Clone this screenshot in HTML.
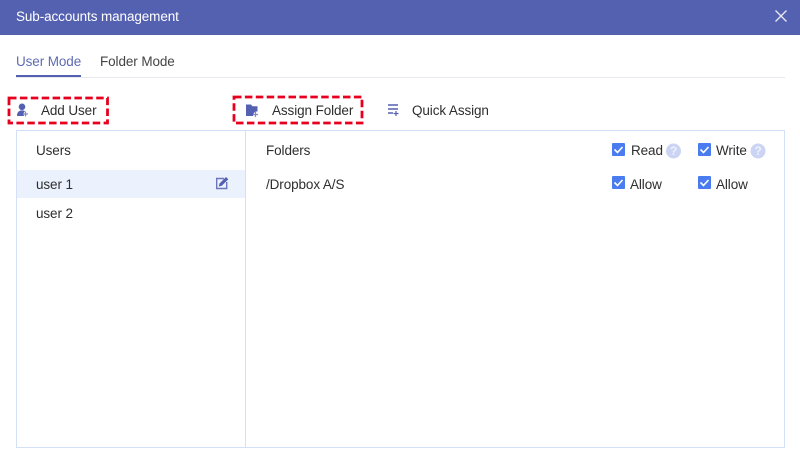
<!DOCTYPE html>
<html>
<head>
<meta charset="utf-8">
<style>
html,body{margin:0;padding:0;width:800px;height:467px;overflow:hidden;background:#fff}
body{position:relative;font-family:"Liberation Sans",Arial,sans-serif;font-size:13.5px;letter-spacing:-.1px;color:#2e2e2e}
.a{position:absolute;white-space:nowrap;line-height:16px;margin-top:1px}
.b{position:absolute}
svg{position:absolute;overflow:visible}
</style>
</head>
<body>
<div class="b" style="left:0;top:0;width:800px;height:35px;background:#5461b1"></div>
<div class="a" style="left:16px;top:8px;color:#fff">Sub-accounts management</div>
<svg style="left:0;top:0" width="800" height="35"><path d="M775.500 10.500L786.500 21.500M786.500 10.500L775.500 21.500" stroke="#e8eaf6" stroke-width="1.300" fill="none"/></svg>

<div class="a" style="left:16px;top:53px;color:#5f6bb5">User Mode</div>
<div class="a" style="left:100px;top:53px;color:#444">Folder Mode</div>
<div class="b" style="left:16px;top:77px;width:769px;height:1px;background:#e6e9f2"></div>
<div class="b" style="left:16px;top:75px;width:65px;height:2px;background:#5461b1"></div>

<div class="b" style="left:16px;top:130px;width:767px;height:316px;border:1px solid #d3e0f7"></div>
<div class="b" style="left:245px;top:131px;width:1px;height:317px;background:#d3e0f7"></div>
<div class="b" style="left:17px;top:170px;width:228px;height:28px;background:#ebf2fd"></div>

<svg style="left:0;top:0" width="800" height="130">
<rect x="9" y="98" width="98.500" height="25" fill="none" stroke="#e6001e" stroke-width="2.800" stroke-dasharray="7.500 3.400"/>
<rect x="234" y="97" width="128" height="26" fill="none" stroke="#e6001e" stroke-width="2.800" stroke-dasharray="7.500 3.400"/>
<!-- add user -->
<circle cx="22" cy="106.800" r="3.300" fill="#5461b1"/>
<path d="M17 116c0-3.800 2-5.600 5-5.600 1.300 0 2.200.3 3 .8-1 .7-1.500 1.700-1.500 2.800 0 .7.200 1.400.6 2z" fill="#5461b1"/>
<path d="M25.500 111.500v5M23 114h5" stroke="#7f89c6" stroke-width="1.200" fill="none"/>
<!-- folder -->
<path d="M246 104.500h5l1.500 1.800h5v5.200c-2.500-.3-4 1-4.500 4.500h-7z" fill="#5461b1"/>
<path d="M255.500 112v5M253 114.500h5" stroke="#7f89c6" stroke-width="1.200" fill="none"/>
<!-- quick assign -->
<path d="M388 105h10M388 109h10M388 113h5" stroke="#5461b1" stroke-width="1.500" fill="none"/>
<path d="M396 111v5M393.500 113.500h5" stroke="#5461b1" stroke-width="1.200" fill="none"/>
</svg>

<div class="a" style="left:41px;top:102px">Add User</div>
<div class="a" style="left:272px;top:102px">Assign Folder</div>
<div class="a" style="left:412px;top:102px">Quick Assign</div>

<div class="a" style="left:36px;top:142px">Users</div>
<div class="a" style="left:36px;top:176px">user 1</div>
<div class="a" style="left:36px;top:205px">user 2</div>
<div class="a" style="left:266px;top:142px">Folders</div>
<div class="a" style="left:266px;top:176px">/Dropbox A/S</div>

<svg style="left:0;top:130px" width="800" height="70">
<!-- edit -->
<path d="M224 48.500h-7.300v10h10v-6.500" fill="#eef1fb" stroke="#6a76bd" stroke-width="1.400"/>
<path d="M219.500 53.500l6.500-6.500 2.300 2.300-6.500 6.500-3 .7z" fill="#5461b1"/>
<!-- checks -->
<rect x="612" y="13" width="13" height="13" rx="1" fill="#4a7cf0"/><path d="M614.500 19.500l3 3 5-5.500" stroke="#fff" stroke-width="1.600" fill="none"/>
<rect x="698" y="13" width="13" height="13" rx="1" fill="#4a7cf0"/><path d="M700.500 19.500l3 3 5-5.500" stroke="#fff" stroke-width="1.600" fill="none"/>
<rect x="612" y="46" width="13" height="13" rx="1" fill="#4a7cf0"/><path d="M614.500 52.500l3 3 5-5.500" stroke="#fff" stroke-width="1.600" fill="none"/>
<rect x="698" y="46" width="13" height="13" rx="1" fill="#4a7cf0"/><path d="M700.500 52.500l3 3 5-5.500" stroke="#fff" stroke-width="1.600" fill="none"/>
<circle cx="673.500" cy="21" r="7.500" fill="#ccd4f3"/>
<circle cx="758" cy="21" r="7.500" fill="#ccd4f3"/>
</svg>
<div class="a" style="left:631px;top:142px">Read</div>
<div class="a" style="left:716px;top:142px">Write</div>
<div class="a" style="left:630px;top:176px">Allow</div>
<div class="a" style="left:716px;top:176px">Allow</div>
<div class="a" style="left:670px;top:144px;font-size:12px;line-height:12px;font-weight:bold;color:#eef1fc">?</div>
<div class="a" style="left:754.500px;top:144px;font-size:12px;line-height:12px;font-weight:bold;color:#eef1fc">?</div>
</body>
</html>
